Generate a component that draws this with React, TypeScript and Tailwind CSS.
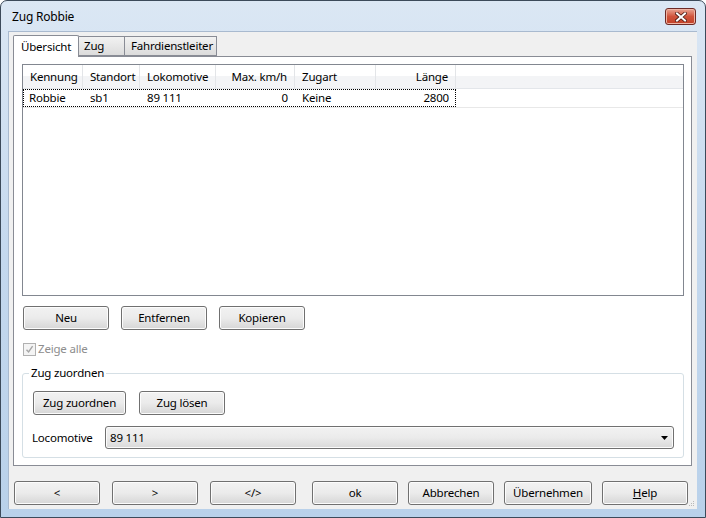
import React from "react";

const font = { fontFamily: '"Noto Sans", "Open Sans", sans-serif', letterSpacing: "-0.2px" };

function Btn({ children, w = "w-[86px]", className = "" }: { children: React.ReactNode; w?: string; className?: string }) {
  return (
    <div
      className={`${w} h-[24px] rounded-[3px] border border-[#707070] bg-gradient-to-b from-[#f2f2f2] via-[#ebebeb] to-[#d6d6d6] flex items-center justify-center text-[11.5px] text-black shadow-[inset_0_0_0_1px_#fcfcfc] ${className}`}
    >
      {children}
    </div>
  );
}

export default function App() {
  const cols = [
    { label: "Kennung", w: "w-[60px]", align: "text-left", val: "Robbie" },
    { label: "Standort", w: "w-[57px]", align: "text-left", val: "sb1" },
    { label: "Lokomotive", w: "w-[76px]", align: "text-left", val: "89 111" },
    { label: "Max. km/h", w: "w-[79px]", align: "text-right", val: "0" },
    { label: "Zugart", w: "w-[81px]", align: "text-left", val: "Keine" },
    { label: "Länge", w: "w-[80px]", align: "text-right", val: "2800" },
  ];
  return (
    <div style={font} className="w-[706px] h-[518px] text-[11.5px] text-black overflow-hidden">
      <div className="w-[706px] h-[518px] rounded-t-[7px] border border-[#3c4a5a] bg-gradient-to-b from-[#dbe7f4] via-[#c4d8ee] to-[#b9d1ea] flex flex-col">
        {/* Title bar */}
        <div className="h-[30px] flex items-center pl-[11px] pr-[9px] shrink-0">
          <div className="flex-1 text-[12px] pt-[2px]">Zug Robbie</div>
          <div className="w-[31px] h-[17px] mt-[1px] rounded-[3px] border border-[#6d2a26] bg-gradient-to-b from-[#e8a493] via-[#d0533b] to-[#c24127] flex items-center justify-center shadow-[inset_0_0_0_1px_#efb5a4]">
            <svg width="12" height="10" viewBox="0 0 12 10">
              <path d="M2 1.5 L10 8.5 M10 1.5 L2 8.5" stroke="#4a1a12" strokeWidth="3.6" strokeLinecap="square" />
              <path d="M2 1.5 L10 8.5 M10 1.5 L2 8.5" stroke="#ffffff" strokeWidth="2" strokeLinecap="square" />
            </svg>
          </div>
        </div>
        {/* Client */}
        <div className="ml-[7px] w-[689px] h-[478px] bg-[#f0f0f0] border-l border-t border-[#a9bacf] flex flex-col">
          {/* Tabs */}
          <div className="flex items-end pl-[4px] pt-[2px] h-[24px] shrink-0 relative z-10">
            <div className="w-[66px] h-[22px] border border-[#898c95] border-b-0 bg-white rounded-t-[2px] px-[7px] pt-[2px] -mb-px whitespace-nowrap">Übersicht</div>
            <div className="w-[46px] h-[20px] border border-[#898c95] border-l-0 bg-gradient-to-b from-[#f2f2f2] to-[#dcdcdc] px-[5px] whitespace-nowrap">Zug</div>
            <div className="w-[92px] h-[20px] border border-[#898c95] border-l-0 bg-gradient-to-b from-[#f2f2f2] to-[#dcdcdc] px-[6px] whitespace-nowrap">Fahrdienstleiter</div>
          </div>
          {/* Panel */}
          <div className="ml-[4px] w-[679px] h-[410px] border border-[#898c95] bg-white flex flex-col pl-[8px] pt-[7px]">
            {/* List */}
            <div className="w-[662px] h-[232px] border border-[#828790] bg-white flex flex-col shrink-0">
              <div className="h-[24px] flex bg-gradient-to-b from-white from-50% to-[#f3f4f6] to-50% border-b border-[#e3e6ea]">
                {cols.map((c) => (
                  <div key={c.label} className={`${c.w} ${c.align} border-r border-[#e3e5e8] px-[7px] leading-[24px] whitespace-nowrap`}>
                    {c.label}
                  </div>
                ))}
                <div className="flex-1" />
              </div>
              <div className="h-[19px] flex border-b border-[#e8e8e8]">
                <div className="flex outline outline-1 outline-dotted outline-[#000] -outline-offset-1">
                  {cols.map((c) => (
                    <div key={c.label} className={`${c.w} ${c.align} px-[7px] leading-[18px] first:pl-[6px]`}>
                      {c.val}
                    </div>
                  ))}
                </div>
              </div>
            </div>
            {/* Buttons */}
            <div className="flex gap-[12px] mt-[10px] ml-[1px] shrink-0">
              <Btn>Neu</Btn>
              <Btn>Entfernen</Btn>
              <Btn>Kopieren</Btn>
            </div>
            {/* Checkbox */}
            <div className="flex items-center mt-[11px] ml-[1px] h-[16px] text-[#8d8d8d]">
              <div className="w-[13px] h-[13px] border border-[#b1b1b1] bg-[#f4f4f4] flex items-center justify-center mr-[2px]">
                <svg width="9" height="9" viewBox="0 0 9 9">
                  <path d="M1.5 4.8 L3.6 7 L7.6 1.2" stroke="#a6a6a6" strokeWidth="1.4" fill="none" />
                </svg>
              </div>
              <span>Zeige alle</span>
            </div>
            {/* Group box */}
            <div className="relative mt-[16px] w-[662px] h-[85px] border border-[#d5dfe5] rounded-[3px] shrink-0">
              <div className="absolute -top-[10px] left-[6px] bg-white px-[2px] leading-[18px]">Zug zuordnen</div>
              <div className="flex gap-[13px] mt-[17px] ml-[10px]">
                <Btn w="w-[93px]">Zug zuordnen</Btn>
                <Btn w="w-[86px]">Zug lösen</Btn>
              </div>
              <div className="flex items-center mt-[11px] ml-[9px]">
                <div className="w-[73px]">Locomotive</div>
                <div className="w-[569px] h-[23px] rounded-[3px] border border-[#707070] bg-gradient-to-b from-[#f2f2f2] via-[#ebebeb] to-[#d9d9d9] flex items-center pl-[4px] pr-[5px] shadow-[inset_0_0_0_1px_#fbfbfb]">
                  <span className="flex-1">89 111</span>
                  <svg width="7" height="4" viewBox="0 0 7 4">
                    <path d="M0 0 H7 L3.5 4 Z" fill="#000" />
                  </svg>
                </div>
              </div>
            </div>
          </div>
          {/* Bottom buttons */}
          <div className="flex mt-[15px] ml-[5px] relative">
            <Btn>&lt;</Btn>
            <Btn className="ml-[12px]">&gt;</Btn>
            <Btn className="ml-[12px]">&lt;/&gt;</Btn>
            <Btn className="ml-[16px]">ok</Btn>
            <Btn className="ml-[10px]">Abbrechen</Btn>
            <Btn w="w-[88px]" className="ml-[10px]">Übernehmen</Btn>
            <Btn className="ml-[10px]">
              <span><span className="underline">H</span>elp</span>
            </Btn>
            <svg className="absolute right-[1px] bottom-[-5px]" width="10" height="10" viewBox="0 0 10 10">
              <g fill="#b9b9b9">
                <rect x="7" y="1" width="1" height="1" />
                <rect x="5" y="3" width="1" height="1" />
                <rect x="7" y="3" width="1" height="1" />
                <rect x="3" y="5" width="1" height="1" />
                <rect x="5" y="5" width="1" height="1" />
                <rect x="7" y="5" width="1" height="1" />
              </g>
            </svg>
          </div>
        </div>
      </div>
    </div>
  );
}
